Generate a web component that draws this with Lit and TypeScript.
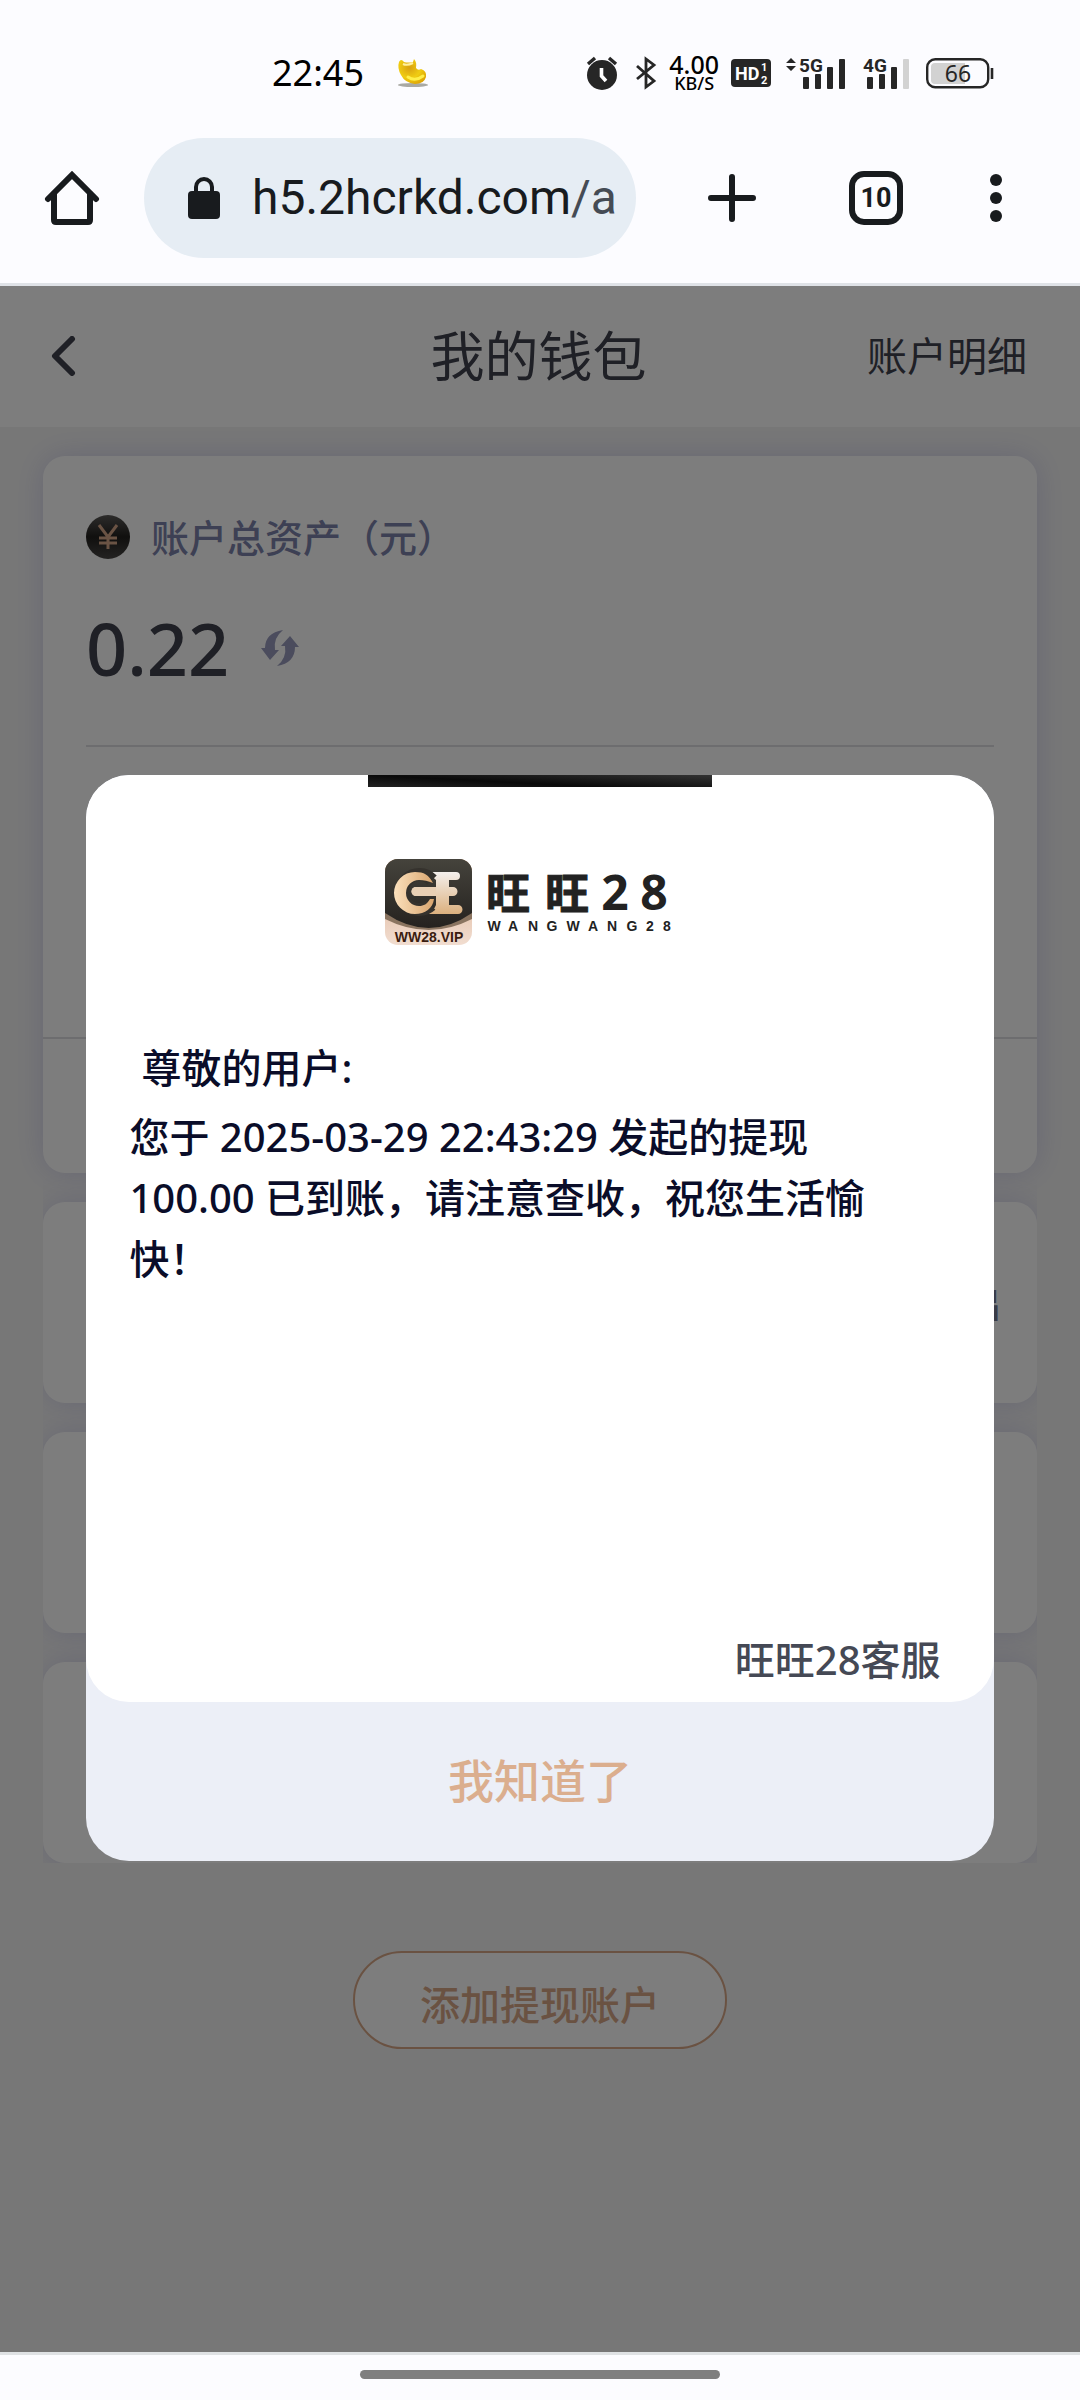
import { LitElement, html, css, svg } from "lit";
import { customElement, property } from "lit/decorators.js";

@customElement("status-bar")
class StatusBar extends LitElement {
  static styles = css`
    :host {
      display: block;
      background: #fcfcff;
      color: #262626;
      font-family: "Noto Sans", "Noto Sans CJK SC", sans-serif;
    }
    .bar {
      display: flex;
      align-items: center;
      height: 85px;
      padding: 30px 86px 0 272px;
    }
    .time {
      font-size: 36px;
      line-height: 44px;
      color: #000;
    }
    .bean {
      margin-left: 33px;
    }
    .icons {
      display: flex;
      align-items: center;
      margin-left: auto;
    }
    svg {
      display: block;
    }
    .bt {
      margin-left: 18px;
    }
    .speed {
      display: flex;
      flex-direction: column;
      align-items: center;
      margin: 0 12px;
      color: #000;
      font-weight: 500;
      font-size: 25px;
      line-height: 20px;
    }
    .unit {
      font-size: 18px;
      line-height: 18px;
    }
    .cell {
      margin-left: 14px;
    }
    .cell2 {
      margin-left: 16px;
    }
    .battery {
      margin-left: 16px;
    }
    text {
      font-family: Roboto, sans-serif;
    }
    .level {
      font-family: "Noto Sans", sans-serif;
    }
  `;
  render() {
    return html`<div class="bar">
      <span class="time">22:45</span>
      <svg class="bean" width="32" height="32" viewBox="0 0 32 32" aria-hidden="true">
        <defs>
          <radialGradient id="g" cx=".4" cy=".35" r=".8">
            <stop offset="0" stop-color="#d9a012" />
            <stop offset=".5" stop-color="#f0cc12" />
            <stop offset="1" stop-color="#d99a00" />
          </radialGradient>
        </defs>
        <ellipse cx="16" cy="28" rx="15" ry="2" fill="#a9a9a4" />
        <path d="M2 5Q4 1 7 5Q11 6 16 5L17 2Q20 5 19 11Q21 14 24 12Q30 14 29 20Q27 27 18 27Q8 26 4 18Q0 11 2 5Z" fill="url(#g)" />
        <path d="M11 20Q18 25 26 19" stroke="#ffef4a" stroke-width="3" fill="none" stroke-linecap="round" />
        <path d="M6 7Q10 9 16 6" stroke="#fff0a0" stroke-width="2" fill="none" />
      </svg>
      <div class="icons">
        <svg width="32" height="34" viewBox="0 0 32 34" role="img" aria-label="闹钟">
          <circle cx="16" cy="19" r="15" fill="#262626" />
          <path d="M2 8L9 2M30 8L23 2" stroke="#262626" stroke-width="3.4" />
          <path d="M15.500 12V20L20 25" stroke="#fff" stroke-width="3.600" fill="none" />
        </svg>
        <svg class="bt" width="21" height="34" viewBox="0 0 21 34" role="img" aria-label="蓝牙">
          <path d="M1 10L18 25L10 31V3L18 9L1 23" stroke="#262626" stroke-width="2.800" fill="none" />
        </svg>
        <div class="speed"><span>4.00</span><span class="unit">KB/S</span></div>
        <svg width="40" height="28" viewBox="0 0 40 28">
          <rect width="40" height="28" rx="4" fill="#262626" />
          <text x="4" y="21" font-size="18" font-weight="700" fill="#fff">HD</text>
          <text x="30" y="12" font-size="11" font-weight="700" fill="#fff">1</text>
          <text x="30" y="25" font-size="11" font-weight="700" fill="#fff">2</text>
        </svg>
        <svg class="cell" width="61" height="42" viewBox="0 -4 61 42">
          <path d="M1 7L6 2L11 7ZM1 10L6 15L11 10Z" fill="#262626" />
          <text x="14" y="16" font-size="19" font-weight="700" fill="#262626">5G</text>
          ${this.bars(18, false)}
        </svg>
        <svg class="cell2" width="48" height="42" viewBox="0 -4 48 42">
          <text x="1" y="16" font-size="19" font-weight="700" fill="#262626">4G</text>
          ${this.bars(5, true)}
        </svg>
        <svg class="battery" width="68" height="34" viewBox="0 0 68 34">
          <rect x="1.200" y="3.200" width="61" height="28" rx="8" fill="none" stroke="#262626" stroke-width="2.400" />
          <path d="M9 7H39V28H9Q5 28 5 24V11Q5 7 9 7Z" fill="#d2d2d2" />
          <path d="M66 12V23" stroke="#262626" stroke-width="2.600" />
          <text class="level" x="32" y="26" font-size="23" text-anchor="middle" fill="#262626">66</text>
        </svg>
      </div>
    </div>`;
  }
  bars(x: number, weak: boolean) {
    return [12, 15, 22, 30].map(
      (h, i) => svg`<rect x=${x + i * 12} y=${33 - h} width="6" height=${h} rx="1" fill=${weak && i === 3 ? "#d2d2d2" : "#262626"} />`
    );
  }
}

@customElement("browser-bar")
class BrowserBar extends LitElement {
  @property() host = "";
  @property() path = "";
  static styles = css`
    :host {
      display: block;
      background: #fcfcff;
      border-bottom: 3px solid #dfe2e7;
    }
    .bar {
      display: flex;
      align-items: center;
      height: 166px;
      padding: 0 36px 2px 0;
    }
    button {
      display: flex;
      align-items: center;
      justify-content: center;
      width: 144px;
      height: 120px;
      padding: 0;
      border: 0;
      background: none;
      color: #181b1e;
    }
    .more {
      width: 96px;
    }
    .pill {
      display: flex;
      align-items: center;
      flex: 1;
      min-width: 0;
      height: 120px;
      margin-right: 24px;
      padding: 0 20px 0 44px;
      box-sizing: border-box;
      border-radius: 60px;
      background: #e6edf4;
    }
    .url {
      flex: 1;
      overflow: hidden;
      margin-left: 32px;
      color: #181b1e;
      font: 400 48px/60px Roboto, sans-serif;
      white-space: nowrap;
      text-decoration: none;
    }
    .path {
      color: #454b54;
    }
    .count {
      width: 54px;
      height: 54px;
      box-sizing: border-box;
      border: 6px solid #181b1e;
      border-radius: 15px;
      font: 700 27px/42px Roboto, sans-serif;
      text-align: center;
    }
  `;
  render() {
    return html`<nav class="bar">
      <button aria-label="主页">
        <svg width="56" height="56" viewBox="0 0 56 56" fill="none" stroke="#181b1e" stroke-width="6" stroke-linecap="round">
          <path d="M4 29L28 5L52 29" stroke-linejoin="miter" />
          <path d="M10 24V50Q10 52 12 52H44Q46 52 46 50V24" />
        </svg>
      </button>
      <div class="pill">
        <svg width="32" height="42" viewBox="0 0 32 42">
          <rect y="14" width="32" height="28" rx="4" fill="#181b1e" />
          <path d="M8 15V10A8 8 0 0 1 24 10V15" fill="none" stroke="#181b1e" stroke-width="4" />
        </svg>
        <a class="url" href="#">${this.host}<span class="path">${this.path}</span></a>
      </div>
      <button aria-label="新标签页">
        <svg width="48" height="48" viewBox="0 0 48 48">
          <path d="M24 3V45M3 24H45" stroke="#181b1e" stroke-width="6" stroke-linecap="round" />
        </svg>
      </button>
      <button aria-label="标签页"><span class="count">10</span></button>
      <button class="more" aria-label="更多">
        <svg width="12" height="48" viewBox="0 0 12 48" fill="#181b1e">
          <circle cx="6" cy="6" r="6" /><circle cx="6" cy="24" r="6" /><circle cx="6" cy="42" r="6" />
        </svg>
      </button>
    </nav>`;
  }
}

@customElement("brand-logo")
class BrandLogo extends LitElement {
  static styles = css`
    :host {
      display: block;
    }
    svg {
      display: block;
    }
    text {
      fill: #222;
      font-weight: 700;
      text-anchor: middle;
      font-family: "Open Sans", "Noto Sans CJK SC", sans-serif;
    }
    .name {
      font-size: 44px;
      stroke: #222;
      stroke-width: 1;
    }
    .digits {
      font-size: 48px;
    }
    .latin {
      font-size: 14px;
      font-family: "Liberation Sans", sans-serif;
    }
    .vip {
      fill: #3a1c10;
      font-size: 14px;
      font-family: "Liberation Sans", sans-serif;
    }
  `;
  render() {
    return html`<svg width="300" height="86" viewBox="0 0 300 86" role="img" aria-label="旺旺28">
      <defs>
        <linearGradient id="dark" x1="0" y1="0" x2="0" y2="1">
          <stop offset="0" stop-color="#45433c" />
          <stop offset="1" stop-color="#25221f" />
        </linearGradient>
        <linearGradient id="gold" x1="0" y1="0" x2="0" y2="1">
          <stop offset="0" stop-color="#f4efec" />
          <stop offset="1" stop-color="#dcb07e" />
        </linearGradient>
        <linearGradient id="ring" x1="0" y1="0" x2="1" y2="0">
          <stop offset="0" stop-color="#fbe0bc" />
          <stop offset="1" stop-color="#d9a56e" />
        </linearGradient>
        <linearGradient id="base" x1="0" y1="0" x2="0" y2="1">
          <stop offset="0" stop-color="#d9a888" />
          <stop offset="1" stop-color="#f1ddd0" />
        </linearGradient>
        <clipPath id="tile"><rect width="87" height="86" rx="13" /></clipPath>
      </defs>
      <g clip-path="url(#tile)">
        <rect width="87" height="86" fill="url(#base)" />
        <path d="M0 0H87V60Q44 82 0 60Z" fill="#8a7460" />
        <path d="M0 0H87V54Q44 84 0 54Z" fill="url(#dark)" />
        <path d="M42 13H71A4 4 0 0 1 71 21H64V28H68A4.500 4.500 0 0 1 68 37H64V46H73A4.500 4.500 0 0 1 73 55H40Q49 52 51 46V37H31A4.500 4.500 0 0 1 31 28H51V21Z" fill="url(#gold)" />
        <path d="M47 21A17.500 17.500 0 1 0 46 46" fill="none" stroke="#35322d" stroke-width="13" />
        <path d="M47 22A17.500 17.500 0 1 0 48 40L43 40Q39 47 33 47Q22 45 22 34Q23 22 34 21Q39 21 42 25Z" fill="none" />
        <path d="M48 24C44 16 39 13 30 13A21 21 0 0 0 30 55C40 55 48 49 49 40H45C42 45 39 47 34 47A13 13 0 0 1 34 21C39 21 43 22 48 24Z" fill="url(#ring)" />
        <path d="M51 28H31A4.500 4.500 0 0 0 31 37H51Z" fill="#e8cfb4" />
      </g>
      <text class="vip" x="44" y="83">WW28.VIP</text>
      <text class="name" y="51" x="123 182">旺旺</text>
      <text class="digits" y="51" x="230 269">28</text>
      <text class="latin" y="72" x="109 128 148 167 188 208 227 247 265 282">WANGWANG28</text>
    </svg>`;
  }
}

@customElement("notice-dialog")
class NoticeDialog extends LitElement {
  static styles = css`
    :host {
      display: flex;
      align-items: center;
      justify-content: center;
      padding-bottom: 2px;
      background: rgba(0, 0, 0, 0.51);
    }
    .dialog {
      width: 84%;
      overflow: hidden;
      border-radius: 43px;
      background: #eceff7;
    }
    .sheet {
      position: relative;
      display: flex;
      flex-direction: column;
      min-height: 927px;
      padding: 84px 53px 12px 43px;
      box-sizing: border-box;
      border-radius: 43px;
      background: #fff;
      color: #0a0d29;
      font-size: 40px;
      line-height: 61px;
      font-weight: 500;
    }
    .strip {
      position: absolute;
      top: 0;
      left: 31%;
      right: 31%;
      height: 12px;
      background: linear-gradient(183deg, #333, #0a0a0a 60%, #222);
    }
    .logo {
      align-self: center;
      margin-bottom: 92px;
    }
    h2,
    p {
      margin: 0;
      font: inherit;
    }
    h2 {
      padding-left: 12px;
      margin-bottom: 8px;
    }
    .sign {
      margin-top: auto;
      color: #454955;
      text-align: right;
    }
    button {
      width: 100%;
      height: 159px;
      padding: 0 0 8px;
      border: 0;
      background: none;
      color: #dbae8e;
      font: inherit;
      font-weight: 500;
      font-size: 46px;
    }
  `;
  render() {
    return html`<div class="dialog" role="dialog" aria-modal="true">
      <div class="sheet">
        <div class="strip"></div>
        <brand-logo class="logo"></brand-logo>
        <h2>尊敬的用户:</h2>
        <p>您于 2025-03-29 22:43:29 发起的提现 100.00 已到账，请注意查收，祝您生活愉快！</p>
        <p class="sign">旺旺28客服</p>
      </div>
      <button>我知道了</button>
    </div>`;
  }
}

@customElement("wallet-page")
class WalletPage extends LitElement {
  static styles = css`
    :host {
      display: block;
      background: #f3f3f3;
      color: #41434f;
    }
    header {
      display: grid;
      grid-template-columns: 1fr auto 1fr;
      align-items: center;
      height: 139px;
      padding: 0 53px 2px 50px;
      background: #fff;
    }
    .back {
      display: flex;
      width: 60px;
      padding: 0;
      border: 0;
      background: none;
    }
    h1 {
      margin: 0;
      font-size: 54px;
      line-height: 72px;
      font-weight: 400;
    }
    .detail {
      justify-self: end;
      color: #41434f;
      font-size: 40px;
      line-height: 60px;
      text-decoration: none;
    }
    .content {
      padding: 29px 43px;
    }
    .card,
    .item {
      border-radius: 22px;
      background: #fff;
      box-shadow: 0 0 30px #d2d2ea;
    }
    .assets {
      padding: 59px 43px 50px;
    }
    .label {
      display: flex;
      align-items: center;
      gap: 21px;
      color: #7c83ab;
      font-size: 38px;
      line-height: 44px;
      font-weight: 500;
    }
    .amount {
      display: flex;
      align-items: center;
      gap: 32px;
      margin-top: 44px;
      padding-bottom: 2px;
      font-size: 72px;
      line-height: 90px;
      font-weight: 500;
    }
    .refresh {
      display: flex;
      padding: 0;
      border: 0;
      background: none;
    }
    .shortcuts {
      height: 290px;
      margin: 0 43px;
      border-top: 2px solid #dfdfe2;
    }
    .tabs {
      height: 134px;
      border-top: 2px solid #dfdfe2;
    }
    ul {
      display: flex;
      flex-direction: column;
      gap: 29px;
      margin: 0;
      padding: 29px 0 0;
      overflow: hidden;
      list-style: none;
    }
    .item {
      display: flex;
      align-items: center;
      justify-content: flex-end;
      height: 201px;
      padding: 0 36px;
      box-sizing: border-box;
      color: #74788f;
      font-size: 36px;
      font-weight: 500;
    }
    .add {
      display: block;
      min-width: 374px;
      height: 98px;
      margin: 88px auto 0;
      padding-top: 6px;
      border: 2px solid #d8a888;
      border-radius: 49px;
      background: #fff;
      color: #d8a888;
      font: inherit;
      font-size: 40px;
      font-weight: 500;
    }
  `;
  render() {
    return html`<header>
        <button class="back" aria-label="返回">
          <svg width="28" height="40" viewBox="0 0 28 40">
            <path d="M22 3L5 20L22 37" fill="none" stroke="#41434f" stroke-width="6" stroke-linecap="round" stroke-linejoin="round" />
          </svg>
        </button>
        <h1>我的钱包</h1>
        <a class="detail" href="#">账户明细</a>
      </header>
      <div class="content">
        <section class="card">
          <div class="assets">
            <div class="label">
              <svg width="44" height="44" viewBox="0 0 44 44">
                <defs>
                  <linearGradient id="c" x1="0" y1="0" x2="0" y2="1">
                    <stop offset="0" stop-color="#5c5a58" />
                    <stop offset=".5" stop-color="#22201e" />
                    <stop offset="1" stop-color="#4a4846" />
                  </linearGradient>
                </defs>
                <circle cx="22" cy="22" r="22" fill="url(#c)" />
                <path d="M13 10L22 22L31 10M22 22V34M13 23H31M13 28H31" fill="none" stroke="#d9a98c" stroke-width="3" />
              </svg>
              <span>账户总资产（元）</span>
            </div>
            <div class="amount">
              <span>0.22</span>
              <button class="refresh" aria-label="刷新">
                <svg width="38" height="36" viewBox="0 0 38 36" fill="#999cbd">
                  <path d="M22 0Q4 3 4 18H0L9 30L18 20H14Q12 8 22 0Z" />
                  <path d="M16 36Q34 33 34 17H38L29 6L20 16H24Q26 28 16 36Z" />
                </svg>
              </button>
            </div>
          </div>
          <div class="shortcuts"></div>
          <div class="tabs"></div>
        </section>
        <ul>
          <li class="item">出</li>
          <li class="item"></li>
          <li class="item"></li>
        </ul>
        <button class="add">添加提现账户</button>
      </div>`;
  }
}

@customElement("app-root")
class AppRoot extends LitElement {
  static styles = css`
    :host {
      display: flex;
      flex-direction: column;
      min-height: 100vh;
      font-family: "Noto Sans", "Noto Sans CJK SC", sans-serif;
    }
    .view {
      position: relative;
      display: flex;
      flex: 1;
    }
    .page {
      flex: 1;
      min-width: 0;
    }
    .overlay {
      position: absolute;
      inset: 0;
    }
    .gesture {
      height: 48px;
      padding-top: 15px;
      box-sizing: border-box;
      border-top: 3px solid #dfe2e4;
      background: #fcfcff;
    }
    .handle {
      width: 360px;
      height: 9px;
      margin: 0 auto;
      border-radius: 5px;
      background: #7f7f7f;
    }
  `;
  render() {
    return html`<status-bar></status-bar>
      <browser-bar host="h5.2hcrkd.com" path="/a"></browser-bar>
      <main class="view">
        <wallet-page class="page"></wallet-page>
        <notice-dialog class="overlay"></notice-dialog>
      </main>
      <div class="gesture"><div class="handle"></div></div>`;
  }
}
